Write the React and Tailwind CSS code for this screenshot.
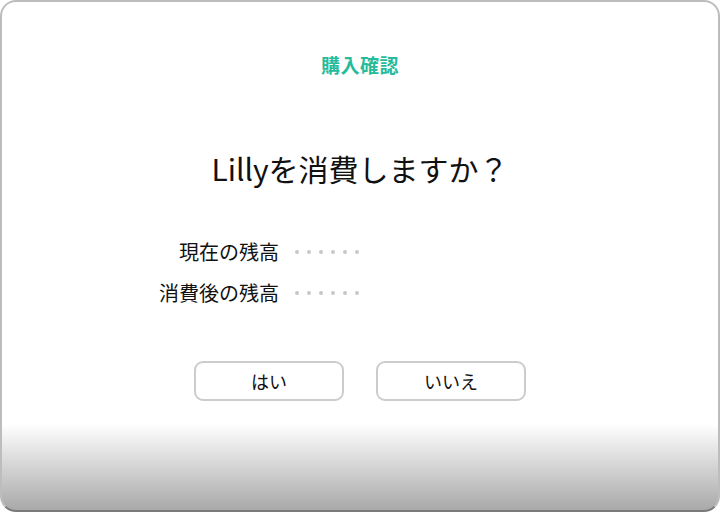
const Dots = () => (
  <div className="flex items-center gap-[8px]">
    {[0, 1, 2, 3, 4, 5].map((i) => (
      <span key={i} className="block w-[4px] h-[4px] rounded-full bg-[#c8c8c8]" />
    ))}
  </div>
);

const rows = ["現在の残高", "消費後の残高"];

export default function App() {
  return (
    <div
      className="w-[720px] h-[512px] overflow-hidden rounded-[16px] border-2 border-[#bdbdbd] border-b-[#7a7a7a] bg-[linear-gradient(to_bottom,#ffffff_0%,#ffffff_83%,#a9a9a9_100%)] flex flex-col items-center text-[#111]"
      style={{ fontFamily: '"Noto Sans CJK JP", "Noto Sans", sans-serif' }}
    >
      {/* Title */}
      <div className="mt-[49px] h-[28px] flex items-center text-[19px] font-bold text-[#27bb9b] tracking-[0.5px]">
        購入確認
      </div>

      {/* Question */}
      <div className="mt-[69px] h-[40px] flex items-center text-[30px]">
        Lillyを消費しますか？
      </div>

      {/* Balances */}
      <div className="mt-[52px] w-full flex flex-col gap-[17px]">
        {rows.map((label) => (
          <div key={label} className="h-[24px] grid grid-cols-[277px_1fr] items-center">
            <div className="text-right text-[20px] leading-none">{label}</div>
            <div className="pl-[16px]">
              <Dots />
            </div>
          </div>
        ))}
      </div>

      {/* Buttons */}
      <div className="mt-[56px] flex gap-[32px]">
        <button className="w-[150px] h-[40px] rounded-[9px] border-2 border-[#cccccc] bg-white text-[18px] flex items-center justify-center">
          はい
        </button>
        <button className="w-[150px] h-[40px] rounded-[9px] border-2 border-[#cccccc] bg-white text-[18px] flex items-center justify-center">
          いいえ
        </button>
      </div>
    </div>
  );
}
